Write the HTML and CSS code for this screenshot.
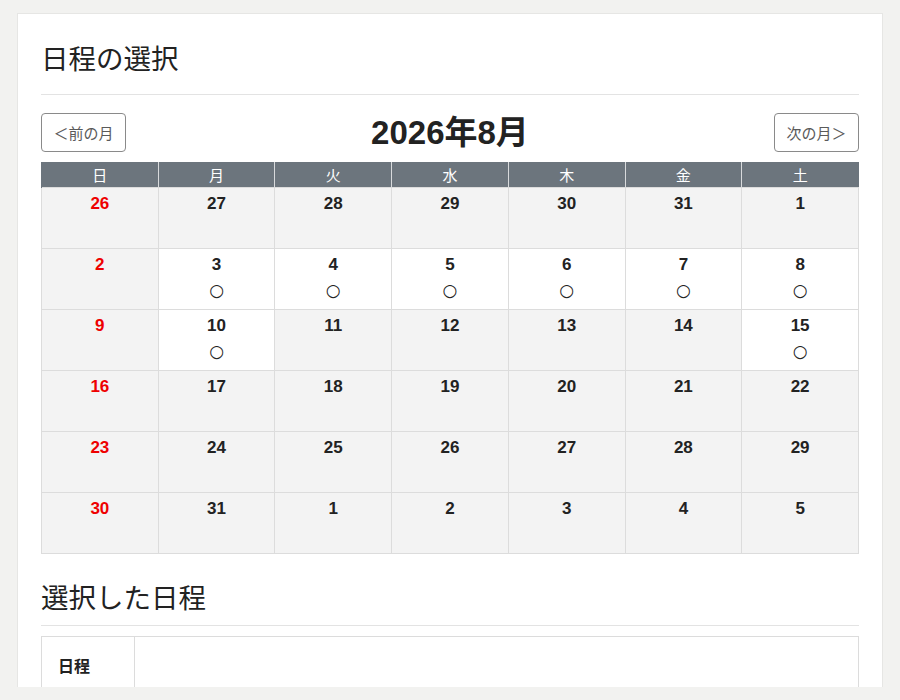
FILE: index.html
```html
<!DOCTYPE html>
<html lang="ja">
<head>
    <meta charset="UTF-8">
    <title>日程の選択</title>
    <link rel="stylesheet" href="styles.css">
</head>
<body>
    <div class="card">
        <h2 class="section-title">日程の選択</h2>

        <div class="month-nav">
            <button class="nav-button">＜前の月</button>
            <div class="month-title">2026年8月</div>
            <button class="nav-button">次の月＞</button>
        </div>

        <table class="calendar">
            <thead>
                <tr>
                    <th>日</th><th>月</th><th>火</th><th>水</th><th>木</th><th>金</th><th>土</th>
                </tr>
            </thead>
            <tbody>
                <tr>
                    <td class="sun">26</td><td>27</td><td>28</td><td>29</td><td>30</td><td>31</td><td>1</td>
                </tr>
                <tr>
                    <td class="sun">2</td>
                    <td class="open">3<span class="mark">○</span></td>
                    <td class="open">4<span class="mark">○</span></td>
                    <td class="open">5<span class="mark">○</span></td>
                    <td class="open">6<span class="mark">○</span></td>
                    <td class="open">7<span class="mark">○</span></td>
                    <td class="open">8<span class="mark">○</span></td>
                </tr>
                <tr>
                    <td class="sun">9</td>
                    <td class="open">10<span class="mark">○</span></td>
                    <td>11</td><td>12</td><td>13</td><td>14</td>
                    <td class="open">15<span class="mark">○</span></td>
                </tr>
                <tr>
                    <td class="sun">16</td><td>17</td><td>18</td><td>19</td><td>20</td><td>21</td><td>22</td>
                </tr>
                <tr>
                    <td class="sun">23</td><td>24</td><td>25</td><td>26</td><td>27</td><td>28</td><td>29</td>
                </tr>
                <tr>
                    <td class="sun">30</td><td>31</td><td>1</td><td>2</td><td>3</td><td>4</td><td>5</td>
                </tr>
            </tbody>
        </table>

        <h2 class="section-title second">選択した日程</h2>

        <table class="selected">
            <tr>
                <th>日程</th>
                <td></td>
            </tr>
        </table>
    </div>
</body>
</html>
```

FILE: styles.css
```css
body {
    margin: 0;
    padding: 13px 17px;
    background-color: #f2f2f0;
    font-family: "Liberation Sans", "Noto Sans CJK JP", sans-serif;
    color: #222;
}

.card {
    background: #ffffff;
    border: 1px solid #e6e6e4;
    border-bottom: none;
    height: 674px;
    box-sizing: border-box;
    padding: 25px 23px 0 23px;
    overflow: hidden;
}

.section-title {
    margin: 0;
    font-size: 27.5px;
    font-weight: normal;
    line-height: 36px;
    padding-bottom: 19px;
    border-bottom: 1px solid #e3e3e3;
    font-family: "Noto Sans CJK JP", sans-serif;
    color: #222;
}

.section-title.second {
    margin-top: 24px;
    padding-bottom: 11px;
}

.month-nav {
    display: flex;
    justify-content: space-between;
    align-items: center;
    margin-top: 18px;
    margin-bottom: 10px;
}

.nav-button {
    width: 85px;
    height: 39px;
    background: #ffffff;
    border: 1px solid #8a8a8a;
    border-radius: 4px;
    color: #5a5a5a;
    font-size: 15px;
    font-family: "Noto Sans CJK JP", sans-serif;
    padding: 0;
}

.month-title {
    font-size: 33px;
    line-height: 39px;
    font-weight: bold;
    color: #222;
}

.calendar {
    width: 100%;
    border-collapse: collapse;
    table-layout: fixed;
}

.calendar th {
    background: #6c757d;
    color: #ffffff;
    font-size: 15px;
    font-weight: normal;
    height: 25px;
    padding: 0;
    border-left: 1px solid #d8dadc;
    font-family: "Noto Sans CJK JP", sans-serif;
}

.calendar th:first-child {
    border-left: 1px solid #6c757d;
}

.calendar td {
    background: #f3f3f3;
    border: 1px solid #dcdcdc;
    height: 61px;
    box-sizing: border-box;
    padding: 5px 0 0 0;
    vertical-align: top;
    text-align: center;
    font-size: 17px;
    font-weight: bold;
    line-height: 22px;
}

.calendar td.open {
    background: #ffffff;
}

.calendar td.sun {
    color: #ee0000;
}

.mark {
    display: block;
    margin-top: 3px;
    font-weight: normal;
    font-size: 17px;
    line-height: 22px;
    font-family: "DejaVu Sans", sans-serif;
}

.selected {
    width: 100%;
    margin-top: 10px;
    border-collapse: collapse;
}

.selected th,
.selected td {
    border: 1px solid #dcdcdc;
    height: 56px;
    font-size: 16px;
    vertical-align: top;
}

.selected th {
    width: 93px;
    text-align: left;
    padding: 16px 0 0 16px;
    box-sizing: border-box;
    font-family: "Noto Sans CJK JP", sans-serif;
}
```
